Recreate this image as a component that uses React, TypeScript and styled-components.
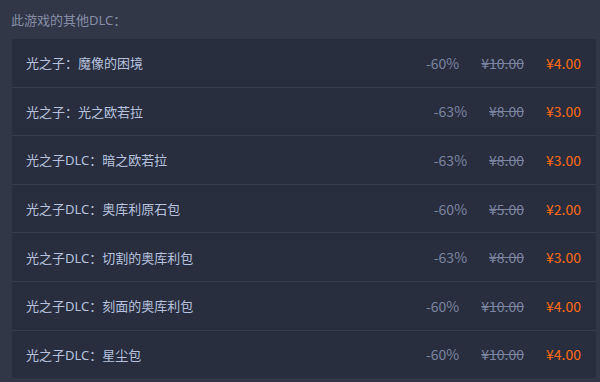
import styled, { createGlobalStyle } from 'styled-components';

const GlobalStyle = createGlobalStyle`
   html, body {
      margin: 0;
      padding: 0;
      background-color: #323748;
   }
`

const Page = styled.div`
   width: 600px;
   height: 382px;
   overflow: hidden;
   padding: 0 4px 0 12px;
   box-sizing: border-box;
   font-family: "Noto Sans CJK SC", "Noto Sans", sans-serif;
   background-color: #323748;
`

const Title = styled.div`
   height: 39px;
   display: flex;
   align-items: center;
   margin-left: -1px;
   font-family: "Noto Sans", "Noto Sans CJK SC", sans-serif;
   font-size: 13px;
   color: #858ea6;
`

const List = styled.ul`
   margin: 0;
   padding: 0;
   list-style: none;
   background-color: #292e3e;
`

const Row = styled.li`
   height: 47.6px;
   display: flex;
   align-items: center;
   padding: 0 15px 0 14px;
   border-bottom: 1px solid #363b4c;

   &:last-child {
      border-bottom: none;
   }
`

const Name = styled.span`
   flex: 1;
   font-family: "Noto Sans", "Noto Sans CJK SC", sans-serif;
   font-size: 13px;
   color: #b6c2de;
`

const Prices = styled.div`
   display: flex;
   align-items: center;
   gap: 22px;
   font-size: 14px;
`

const Discount = styled.span`
   color: #7b85a1;
`

const Original = styled.span`
   color: #7b85a1;
   text-decoration: line-through;
`

const Final = styled.span`
   color: #ff6a14;
`

const dlcs = [
   { name: '光之子：魔像的困境', discount: '-60%', original: '¥10.00', final: '¥4.00' },
   { name: '光之子：光之欧若拉', discount: '-63%', original: '¥8.00', final: '¥3.00' },
   { name: '光之子DLC：暗之欧若拉', discount: '-63%', original: '¥8.00', final: '¥3.00' },
   { name: '光之子DLC：奥库利原石包', discount: '-60%', original: '¥5.00', final: '¥2.00' },
   { name: '光之子DLC：切割的奥库利包', discount: '-63%', original: '¥8.00', final: '¥3.00' },
   { name: '光之子DLC：刻面的奥库利包', discount: '-60%', original: '¥10.00', final: '¥4.00' },
   { name: '光之子DLC：星尘包', discount: '-60%', original: '¥10.00', final: '¥4.00' },
]

const App = () => {
   return (
      <>
         <GlobalStyle />
         <Page>
            <Title>此游戏的其他DLC：</Title>
            <List>
               {dlcs.map((dlc) => (
                  <Row key={dlc.name}>
                     <Name>{dlc.name}</Name>
                     <Prices>
                        <Discount>{dlc.discount}</Discount>
                        <Original>{dlc.original}</Original>
                        <Final>{dlc.final}</Final>
                     </Prices>
                  </Row>
               ))}
            </List>
         </Page>
      </>
   )
}

export default App;
